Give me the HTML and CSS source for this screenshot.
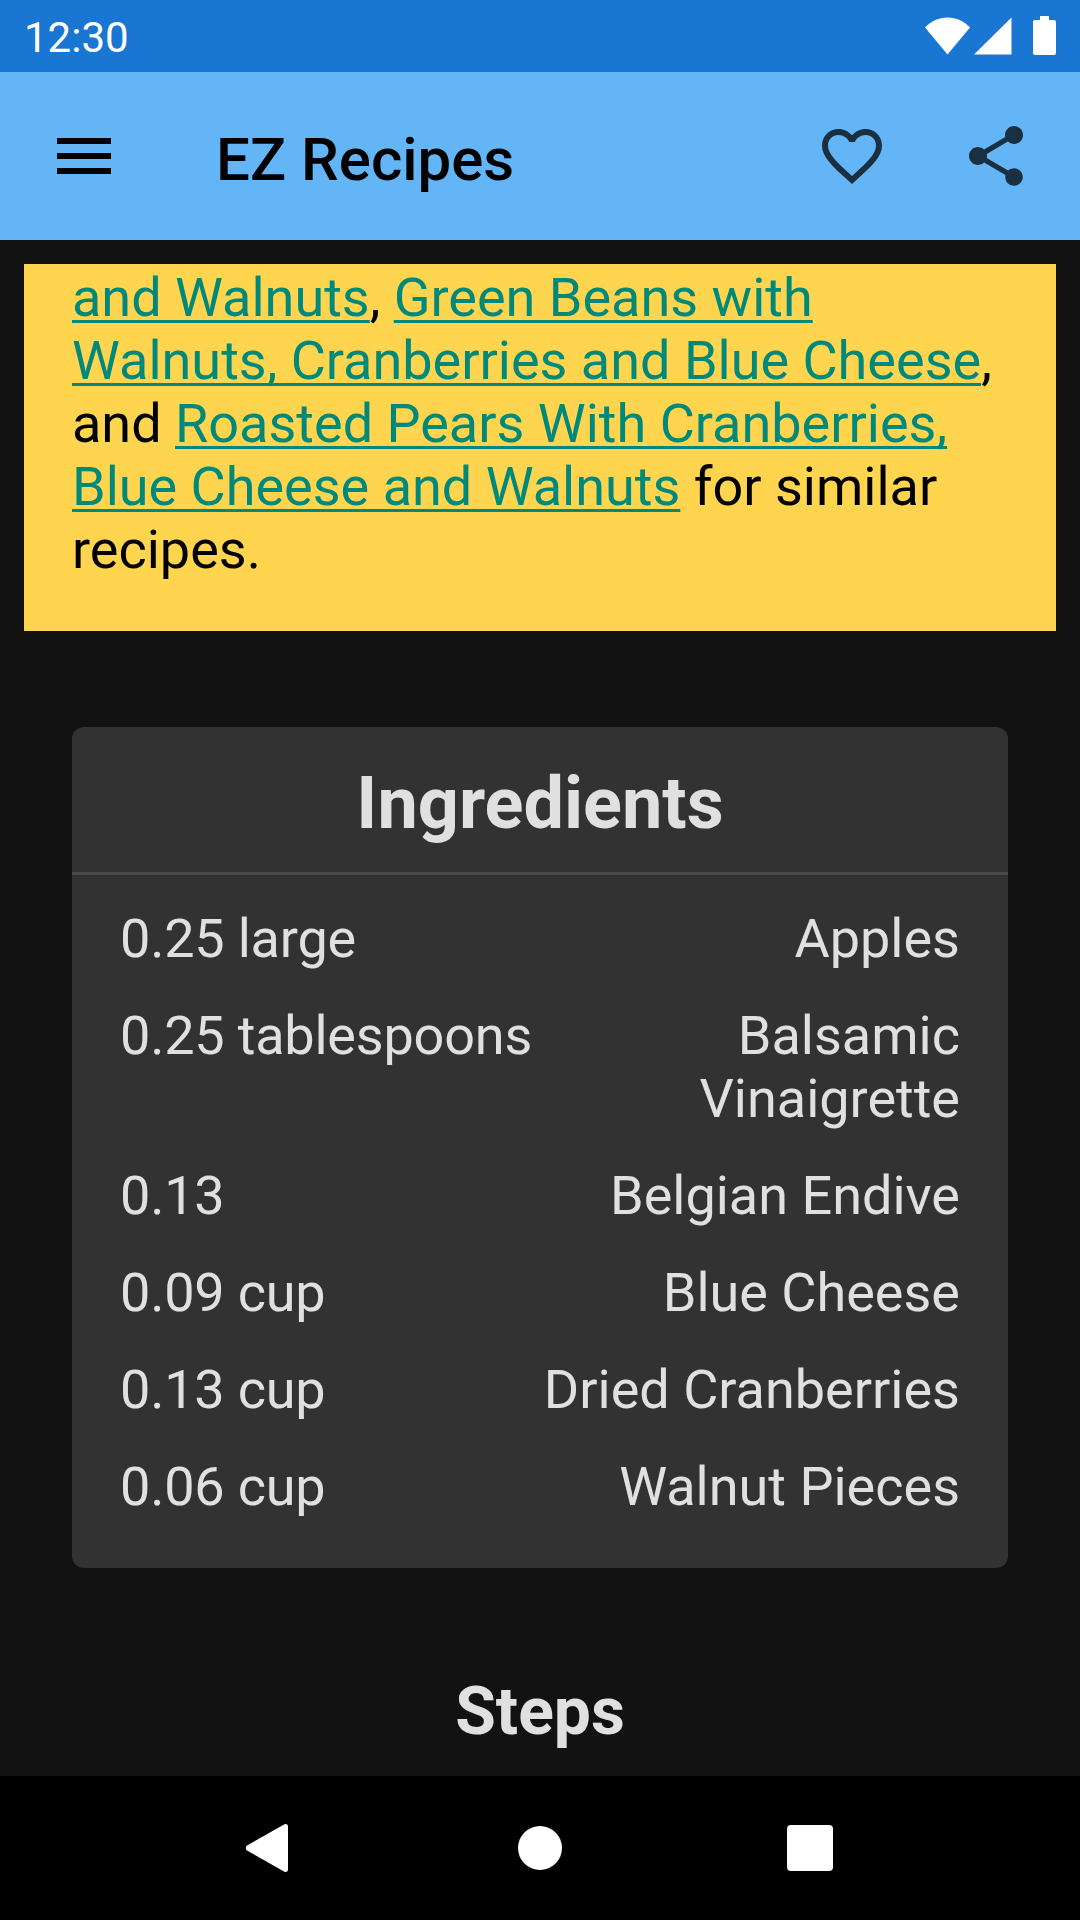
FILE: index.html
```html
<!DOCTYPE html>
<html lang="en">
  <head>
    <meta charset="UTF-8" />
    <meta name="viewport" content="width=device-width, initial-scale=1.0" />
    <title>EZ Recipes</title>
    <link rel="stylesheet" href="styles.css">
  </head>
  <body>
    <div class="screen">
      <div class="status-bar">
        <span class="status-time">12:30</span>
        <div class="status-icons">
          <svg class="wifi-icon" width="45" height="38" viewBox="0 0 45 38">
            <path d="M0 10.5C6 4 14 .5 22.5 .5S39 4 45 10.5L22.5 37.5Z" />
          </svg>
          <svg class="signal-icon" width="38" height="38" viewBox="0 0 38 38">
            <path d="M0 37.5L37.5 .5V37.5Z" />
          </svg>
          <svg class="battery-icon" width="23" height="39" viewBox="0 0 23 39">
            <path d="M7 0H16V4H21C22.1 4 23 4.9 23 6V37C23 38.1 22.1 39 21 39H2C.9 39 0 38.1 0 37V6C0 4.9 .9 4 2 4H7Z" />
          </svg>
        </div>
      </div>

      <header class="toolbar">
        <button class="icon-button menu-button">
          <svg width="72" height="72" viewBox="0 0 24 24">
            <path d="M3 18h18v-2H3v2zm0-5h18v-2H3v2zm0-7v2h18V6H3z" />
          </svg>
        </button>
        <h1 class="toolbar-title">EZ Recipes</h1>
        <button class="icon-button">
          <svg width="72" height="72" viewBox="0 0 24 24">
            <path d="M16.5 3c-1.74 0-3.41.81-4.5 2.09C10.91 3.81 9.24 3 7.5 3 4.42 3 2 5.42 2 8.5c0 3.78 3.4 6.86 8.55 11.54L12 21.35l1.45-1.32C18.6 15.36 22 12.28 22 8.5 22 5.42 19.58 3 16.5 3zm-4.4 15.55l-.1.1-.1-.1C7.14 14.24 4 11.39 4 8.5 4 6.5 5.5 5 7.5 5c1.54 0 3.04.99 3.57 2.36h1.87C13.46 5.99 14.96 5 16.5 5c2 0 3.5 1.5 3.5 3.5 0 2.89-3.14 5.74-7.9 10.05z" />
          </svg>
        </button>
        <button class="icon-button">
          <svg width="72" height="72" viewBox="0 0 24 24">
            <path d="M18 16.08c-.76 0-1.44.3-1.96.77L8.91 12.7c.05-.23.09-.46.09-.7s-.04-.47-.09-.7l7.05-4.11c.54.5 1.25.81 2.04.81 1.66 0 3-1.34 3-3s-1.34-3-3-3-3 1.34-3 3c0 .24.04.47.09.7L8.04 9.81C7.5 9.31 6.79 9 6 9c-1.66 0-3 1.34-3 3s1.34 3 3 3c.79 0 1.5-.31 2.04-.81l7.12 4.16c-.05.21-.08.43-.08.65 0 1.61 1.31 2.92 2.92 2.92 1.61 0 2.92-1.31 2.92-2.92s-1.31-2.92-2.92-2.92z" />
          </svg>
        </button>
      </header>

      <main class="content">
        <p class="summary">
          <a href="#">and Walnuts</a>, <a href="#">Green Beans with Walnuts, Cranberries and Blue Cheese</a>,
          and <a href="#">Roasted Pears With Cranberries, Blue Cheese and Walnuts</a> for similar recipes.
        </p>

        <section class="card">
          <h2 class="card-title">Ingredients</h2>
          <div class="ingredients">
            <div class="ingredient"><span class="ingredient-amount">0.25 large</span><span class="ingredient-name">Apples</span></div>
            <div class="ingredient"><span class="ingredient-amount">0.25 tablespoons</span><span class="ingredient-name">Balsamic Vinaigrette</span></div>
            <div class="ingredient"><span class="ingredient-amount">0.13</span><span class="ingredient-name">Belgian Endive</span></div>
            <div class="ingredient"><span class="ingredient-amount">0.09 cup</span><span class="ingredient-name">Blue Cheese</span></div>
            <div class="ingredient"><span class="ingredient-amount">0.13 cup</span><span class="ingredient-name">Dried Cranberries</span></div>
            <div class="ingredient"><span class="ingredient-amount">0.06 cup</span><span class="ingredient-name">Walnut Pieces</span></div>
          </div>
        </section>

        <h2 class="steps-title">Steps</h2>
      </main>

      <nav class="nav-bar">
        <svg class="nav-back" width="44" height="50" viewBox="0 0 44 50">
          <path d="M39 1.5C40.5 .4 43 1 43 3.5V46.5C43 49 40.5 49.6 39 48.5L2 27.5C.4 26.3 .4 23.7 2 22.5Z" />
        </svg>
        <span class="nav-home"></span>
        <span class="nav-recents"></span>
      </nav>
    </div>
  </body>
</html>
```

FILE: styles.css
```css
body {
  margin: 0;
  font-family: Roboto, "Noto Sans", sans-serif;
  background-color: #121212;
}

.screen {
  display: flex;
  flex-direction: column;
  height: 1920px;
  overflow: hidden;
}

.status-bar {
  flex: none;
  display: flex;
  align-items: center;
  justify-content: space-between;
  height: 72px;
  padding: 0 24px;
  background-color: #1976d2;
  color: #fff;
}

.status-time {
  padding-top: 3px;
  font-size: 42px;
  line-height: 69px;
}

.status-icons {
  display: flex;
  align-items: flex-end;
  height: 39px;
  margin-bottom: 1px;
  fill: #fff;
}

.signal-icon {
  margin-left: 4px;
}

.battery-icon {
  margin-left: 21px;
}

.toolbar {
  flex: none;
  display: flex;
  align-items: center;
  height: 168px;
  padding: 0 12px;
  background-color: #64b5f6;
}

.icon-button {
  display: flex;
  align-items: center;
  justify-content: center;
  width: 144px;
  height: 144px;
  padding: 0;
  background: none;
  border: none;
  fill: #1a2f40;
}

.menu-button {
  fill: #000;
}

.toolbar-title {
  flex: 1;
  margin: 0 0 0 60px;
  padding-top: 7px;
  font-size: 60px;
  font-weight: 500;
  color: #000;
}

.content {
  flex: 1;
  overflow: hidden;
  padding-top: 24px;
}

.summary {
  margin: 0 24px;
  padding: 2px 48px 50px;
  background-color: #ffd54f;
  color: #000;
  font-size: 54px;
  line-height: 63px;
}

.summary a {
  color: #00897b;
  text-decoration: underline;
  text-decoration-thickness: 3px;
  text-underline-offset: 4px;
  text-decoration-skip-ink: none;
}

.card {
  margin: 96px 72px 0;
  background-color: #323232;
  border-radius: 12px;
  color: #e0e0e0;
}

.card-title {
  margin: 0;
  padding: 35px 0 26px;
  border-bottom: 3px solid #4a4a4a;
  font-size: 72px;
  line-height: 84px;
  font-weight: 700;
  text-align: center;
}

.ingredients {
  display: flex;
  flex-direction: column;
  gap: 34px;
  padding: 32px 48px 50px;
  font-size: 54px;
  line-height: 63px;
}

.ingredient {
  display: grid;
  grid-template-columns: 1fr 1fr;
}

.ingredient-amount {
  letter-spacing: -0.2px;
}

.ingredient-name {
  text-align: right;
}

.steps-title {
  margin: 109px 0 0;
  color: #e0e0e0;
  font-size: 66px;
  line-height: 70px;
  font-weight: 700;
  text-align: center;
}

.nav-bar {
  flex: none;
  display: grid;
  grid-template-columns: 270px 270px 270px;
  justify-content: center;
  justify-items: center;
  align-items: center;
  height: 144px;
  background-color: #000;
  fill: #fff;
}

.nav-back {
  margin-right: 7px;
}

.nav-home {
  width: 44px;
  height: 44px;
  border-radius: 50%;
  background-color: #fff;
}

.nav-recents {
  width: 46px;
  height: 46px;
  border-radius: 4px;
  background-color: #fff;
}
```
